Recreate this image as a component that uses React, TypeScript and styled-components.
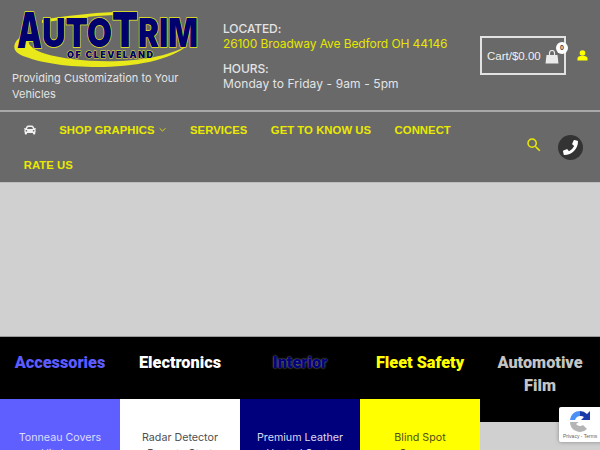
import React from "react";
import styled, { createGlobalStyle } from "styled-components";
import { FaCar, FaPhoneAlt } from "react-icons/fa";
import { MdSearch } from "react-icons/md";

const Global = createGlobalStyle`
  html, body { margin: 0; padding: 0; width: 600px; height: 450px; overflow: hidden; background: #d0d0d0; }
  * { box-sizing: border-box; }
  body { font-family: Inter, "Liberation Sans", sans-serif; }
`;
const Page = styled.div`width: 600px; height: 450px; overflow: hidden; position: relative; background: #d0d0d0;`;
const Header = styled.header`background: #696969; height: 183px; border-bottom: 1px solid #bdbdbd;`;
const TopBar = styled.div`height: 112px; border-bottom: 2px solid #a8a8a8; display: flex; padding: 11px 12px 0;`;
const Brand = styled.div`width: 211px; display: flex; flex-direction: column;`;
const LogoMark = styled.svg`display: block; overflow: visible;`;
const Tagline = styled.p`margin: 1px 0 0; width: 190px; font-size: 11px; line-height: 16px; color: #e4e4e4;`;
const Info = styled.div`width: 257px; padding-top: 10px; font-size: 12px; line-height: 15px; color: #e4e4e4;`;
const InfoBlock = styled.div`margin-bottom: 10px; letter-spacing: .1px;`;
const Label = styled.div`letter-spacing: -.1px; font-weight: 500;`;
const Address = styled.div`color: #e6e600; letter-spacing: -.1px;`;
const Cart = styled.div`width: 86px; height: 39px; margin-top: 25px; border: 2px solid #e2e2e2; display: flex; align-items: center; padding-left: 5px; font-family: "Liberation Sans", sans-serif; font-size: 11.5px; color: #f0f0f0; position: relative; white-space: nowrap;`;
const Count = styled.span`position: absolute; right: -4px; top: 4px; width: 12px; height: 12px; border-radius: 50%; background: #fff; color: #333; font-size: 7px; font-weight: 700; text-align: center; line-height: 12px;`;
const Bag = styled.svg`margin-left: 4px; margin-top: 3px; flex: none;`;
const Account = styled.svg`margin: 39px 0 0 11px;`;
const Nav = styled.nav`height: 70px; position: relative; display: flex; flex-wrap: wrap; align-content: flex-start; padding: 0 90px 0 12px;`;
const NavItem = styled.a`height: 35px; display: flex; align-items: center; padding: 0 11.75px; font-family: "Liberation Sans", sans-serif; font-weight: 700; font-size: 11.3px; letter-spacing: .05px; color: #eaea00; white-space: nowrap;`;
const CarItem = styled(NavItem)`padding: 0 11.5px 0 12px;`;
const Caret = styled.svg`margin-left: 5px;`;
const SearchSlot = styled.div`position: absolute; left: 525px; top: 24px; display: flex; color: #eaea00;`;
const Phone = styled.div`position: absolute; left: 558px; top: 23px; width: 25px; height: 25px; border-radius: 50%; background: #333; color: #fff; display: flex; align-items: center; justify-content: center;`;
const PhoneGlyph = styled(FaPhoneAlt)`transform: scaleX(-1);`;
const Hero = styled.div`height: 154px; background: #d0d0d0; border-bottom: 1px solid #999;`;
const Columns = styled.div`display: grid; grid-template-columns: repeat(5, 120px); align-items: start;`;
const Column = styled.div`display: flex; flex-direction: column;`;
const Title = styled.h3<{ $c: string; $glow?: boolean }>`margin: 0; height: 62px; background: #000; padding-top: 14px; font-family: Roboto, sans-serif; font-weight: 900; font-size: 16.3px; line-height: 23px; text-align: center; color: ${p => p.$c}; ${p => p.$glow ? "text-shadow: 0 0 2px #aaa;" : ""}`;
const TitleTall = styled(Title)`height: 85px;`;
const Card = styled.div<{ $bg: string; $fg: string }>`height: 60px; background: ${p => p.$bg}; color: ${p => p.$fg}; padding-top: 31px; font-size: 10.7px; line-height: 16px; text-align: center;`;
const Recaptcha = styled.div`position: absolute; left: 559px; top: 407px; width: 60px; height: 35px; background: #fff; border-radius: 2px; box-shadow: 0 0 4px rgba(0,0,0,.35); display: flex; flex-direction: column; align-items: flex-start; padding: 3px 0 0 4px;`;
const RecaptchaIcon = styled.svg`margin: 0 0 1px 6px; flex: none;`;
const Terms = styled.span`font-family: "Liberation Sans", sans-serif; font-size: 5px; line-height: 6px; color: #666; white-space: nowrap;`;

const NAVY = "#00006e";
const GOLD = "#e8e81a";

const Logo = () => (
  <LogoMark width="190" height="58" viewBox="0 0 190 58">
    <path d="M14 22C0 30-3 41 14 46C50 60 145 62 176 34C150 50 100 53 60 48C28 44 8 36 20 22Z" fill={GOLD} />
    <path d="M30 9C50 5 80 2 102 1L102 4C80 5 50 8 30 12Z" fill={GOLD} />
    <g fontFamily="Inter, sans-serif" fontWeight="900" fill={NAVY} stroke={GOLD} strokeWidth="1.5" paintOrder="stroke">
      <text x="5" y="37" fontSize="49" textLength="25" lengthAdjust="spacingAndGlyphs">A</text>
      <text x="30" y="36" fontSize="40" textLength="70" lengthAdjust="spacingAndGlyphs">UTO</text>
      <text x="100" y="36" fontSize="48" textLength="26" lengthAdjust="spacingAndGlyphs">T</text>
      <text x="126" y="36" fontSize="40" textLength="60" lengthAdjust="spacingAndGlyphs">RIM</text>
      <text x="55" y="47" fontSize="9" strokeWidth=".8" textLength="86" lengthAdjust="spacing">OF CLEVELAND</text>
    </g>
  </LogoMark>
);

export default function App() {
  return (
    <Page>
      <Global />
      <Header>
        <TopBar>
          <Brand>
            <Logo />
            <Tagline>Providing Customization to Your Vehicles</Tagline>
          </Brand>
          <Info>
            <InfoBlock><Label>LOCATED:</Label><Address>26100 Broadway Ave Bedford OH 44146</Address></InfoBlock>
            <InfoBlock><Label>HOURS:</Label><div>Monday to Friday - 9am - 5pm</div></InfoBlock>
          </Info>
          <Cart>
            Cart/$0.00
            <Bag width="14" height="14" viewBox="0 0 14 14"><path d="M4.500 5V3a2.500 2.500 0 0 1 5 0V5" fill="none" stroke="#eaeaea" strokeWidth="1.200" /><path d="M1.500 5h11l1 8.500H.5z" fill="#eaeaea" /></Bag>
            <Count>0</Count>
          </Cart>
          <Account width="11" height="11" viewBox="0 0 11 11"><circle cx="5.500" cy="3" r="2.800" fill="#ffff00" /><path d="M.5 10.500V8.500C.5 7 2 6 3.500 6h4C9 6 10.500 7 10.500 8.500v2z" fill="#ffff00" /></Account>
        </TopBar>
        <Nav>
          <CarItem aria-label="Home"><FaCar size={12} color="#f2f2f2" /></CarItem>
          <NavItem>SHOP GRAPHICS<Caret width="7" height="6" viewBox="0 0 8 6"><path d="M.7 1l3.300 3.300L7.300 1" fill="none" stroke="#eaea00" strokeWidth="1" /></Caret></NavItem>
          <NavItem>SERVICES</NavItem>
          <NavItem>GET TO KNOW US</NavItem>
          <NavItem>CONNECT</NavItem>
          <NavItem>RATE US</NavItem>
          <SearchSlot><MdSearch size={18} /></SearchSlot>
          <Phone><PhoneGlyph size={15} /></Phone>
        </Nav>
      </Header>
      <Hero />
      <Columns>
        <Column><Title $c="#5c5cff">Accessories</Title><Card $bg="#5f5fff" $fg="#dcdcff">Tonneau Covers<br />Hitches</Card></Column>
        <Column><Title $c="#fff">Electronics</Title><Card $bg="#fff" $fg="#4f4f4f">Radar Detector<br />Remote Start</Card></Column>
        <Column><Title $c="#00007d" $glow>Interior</Title><Card $bg="#00007d" $fg="#dcdcf0">Premium Leather<br />Heated Seats</Card></Column>
        <Column><Title $c="#ffff00">Fleet Safety</Title><Card $bg="#ffff00" $fg="#4f4f1a">Blind Spot<br />Sensors</Card></Column>
        <Column><TitleTall $c="#c4c4c4">Automotive<br />Film</TitleTall></Column>
      </Columns>
      <Recaptcha>
        <RecaptchaIcon width="22" height="22" viewBox="0 0 22 22">
          <path d="M11 1A10 10 0 0 1 18 4L21 1V10H12L15 7A6 6 0 0 0 11 6Z" fill="#1c3aa9" />
          <path d="M11 1C6 1 2 4 1 10H6L7 8A5 5 0 0 1 11 6Z" fill="#4a90f5" />
          <path d="M1 12A10 10 0 0 0 18 19L14 15A5 5 0 0 1 7 14L10 12Z" fill="#b5b5b5" />
        </RecaptchaIcon>
        <Terms>Privacy - Terms</Terms>
      </Recaptcha>
    </Page>
  );
}
